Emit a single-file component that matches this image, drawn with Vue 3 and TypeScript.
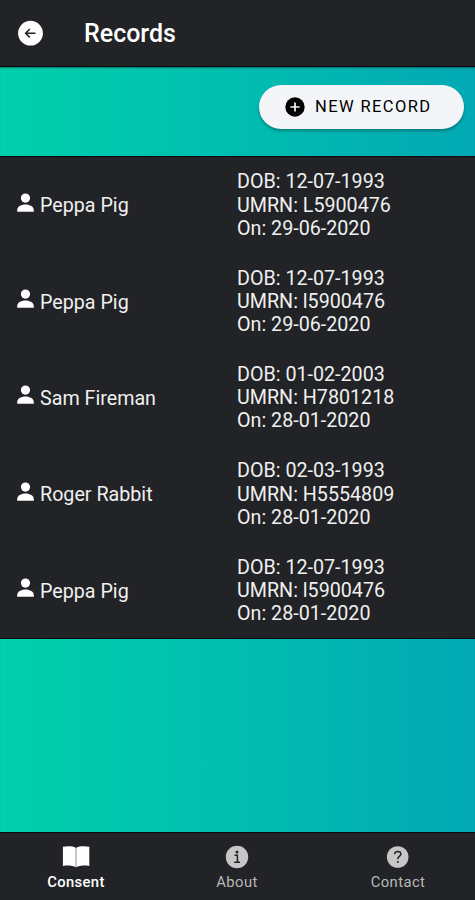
<script setup lang="ts">
interface PatientRecord {
  name: string
  dob: string
  umrn: string
  on: string
}

const records: PatientRecord[] = [
  { name: 'Peppa Pig', dob: '12-07-1993', umrn: 'L5900476', on: '29-06-2020' },
  { name: 'Peppa Pig', dob: '12-07-1993', umrn: 'l5900476', on: '29-06-2020' },
  { name: 'Sam Fireman', dob: '01-02-2003', umrn: 'H7801218', on: '28-01-2020' },
  { name: 'Roger Rabbit', dob: '02-03-1993', umrn: 'H5554809', on: '28-01-2020' },
  { name: 'Peppa Pig', dob: '12-07-1993', umrn: 'l5900476', on: '28-01-2020' },
]
</script>

<template>
  <div class="screen">
    <header class="toolbar">
      <button class="back" aria-label="Back">
        <svg viewBox="0 0 26 26" width="26" height="26">
          <circle cx="13.5" cy="13.2" r="12.4" fill="#fff" />
          <path d="M12.8 9 8.6 13.2l4.200 4.200M8.800 13.200h9.700" fill="none" stroke="#222326" stroke-width="1.500" />
        </svg>
      </button>
      <h1>Records</h1>
    </header>

    <main class="content">
      <div class="actions">
        <button class="new-record">
          <svg viewBox="0 0 20 20" width="20" height="20">
            <circle cx="10" cy="10" r="9.7" fill="#000" />
            <path d="M10 5.400v9.200M5.400 10h9.200" stroke="#f4f5f8" stroke-width="1.700" />
          </svg>
          <span>NEW RECORD</span>
        </button>
      </div>
      <ul class="list">
        <li v-for="(record, index) in records" :key="index" class="row">
          <div class="person">
            <svg viewBox="0 0 18 20" width="18" height="20">
              <circle cx="8.500" cy="5.100" r="4.600" fill="#fff" />
              <path d="M.2 18.700v-1.500c0-3.400 3.700-5.600 8.300-5.600s8.300 2.200 8.300 5.600v1.500z" fill="#fff" />
            </svg>
            <span>{{ record.name }}</span>
          </div>
          <div class="details">
            <div>DOB: {{ record.dob }}</div>
            <div>UMRN: {{ record.umrn }}</div>
            <div>On: {{ record.on }}</div>
          </div>
        </li>
      </ul>
    </main>

    <nav class="tabs">
      <a class="tab active">
        <svg viewBox="0 0 28 24" width="28" height="24">
          <path d="M.9 1.800C5 1 10.500 1 14 2.900 17.500 1 23 1 27.300 1.800V20.900C23 20 17.500 20.300 14 22.200 10.500 20.300 5 20 .9 20.900z" fill="#fff" />
          <path d="M14 3v19" stroke="#aaa" stroke-width="1.300" />
        </svg>
        <span>Consent</span>
      </a>
      <a class="tab">
        <svg viewBox="0 0 24 24" width="24" height="24">
          <circle cx="12" cy="12" r="11.200" fill="#c6c6c7" />
          <circle cx="12" cy="7.100" r="1.500" fill="#222326" />
          <path d="M9.500 10.300h2.900v7M9.200 17.300h5.800" fill="none" stroke="#222326" stroke-width="1.500" />
        </svg>
        <span>About</span>
      </a>
      <a class="tab">
        <svg viewBox="0 0 24 24" width="24" height="24">
          <circle cx="11.700" cy="12" r="10.800" fill="#c6c6c7" />
          <path d="M8.700 9.200c0-1.900 1.300-2.700 3-2.700 1.800 0 3.200 1 3.200 2.600 0 2.300-3.100 2.300-3.100 4.700v.5" fill="none" stroke="#222326" stroke-width="1.500" />
          <circle cx="11.800" cy="16.900" r="1" fill="#222326" />
        </svg>
        <span>Contact</span>
      </a>
    </nav>
  </div>
</template>

<style>
body {
  margin: 0;
  background: #222326;
}
</style>

<style scoped>
.screen {
  display: flex;
  flex-direction: column;
  box-sizing: border-box;
  height: 900px;
  overflow: hidden;
  background: #222326;
  color: #f0f0f0;
  font-family: Roboto, sans-serif;
}
svg {
  display: block;
  flex: none;
}
button {
  border: 0;
  margin: 0;
  padding: 0;
  font: inherit;
}
.toolbar {
  display: flex;
  align-items: center;
  gap: 41px;
  box-sizing: border-box;
  height: 67px;
  padding-left: 17px;
  border-bottom: 1px solid #0c0810;
}
.back {
  background: none;
}
h1 {
  margin: 2px 0 0;
  font-size: 25px;
  font-weight: 500;
  line-height: 30px;
  color: #fff;
}
.content {
  flex: 1;
  background: linear-gradient(90deg, #00d0ac, #01bdb0 50%, #02a9b4);
  box-shadow: inset 0 2px 2px -1px rgba(0, 0, 0, 0.4);
}
.actions {
  display: flex;
  justify-content: flex-end;
  box-sizing: border-box;
  height: 89px;
  padding: 18px 11.500px 0 0;
}
.new-record {
  display: flex;
  align-items: center;
  justify-content: center;
  gap: 9.500px;
  box-sizing: border-box;
  width: 205px;
  height: 44px;
  padding-right: 5px;
  border-radius: 22px;
  background: #f4f5f8;
  color: #000;
  font-size: 16.500px;
  font-weight: 400;
  letter-spacing: 1.400px;
  line-height: 20px;
  box-shadow: 0 2px 3px rgba(0, 0, 0, 0.3);
}
.new-record span {
  margin-top: -1px;
}
.list {
  box-sizing: border-box;
  height: 482.500px;
  margin: 0;
  padding: 1px 0 0;
  list-style: none;
  background: #222326;
  border-top: 1px solid #0c0810;
  border-bottom: 1px solid #0c0810;
}
.row {
  display: grid;
  grid-template-columns: 220px 1fr;
  align-items: start;
  box-sizing: border-box;
  height: 96.400px;
  padding: 12.300px 17px 0;
  font-size: 19.700px;
  line-height: 23.200px;
}
.person {
  display: flex;
  gap: 5px;
  padding-top: 24px;
}
.person svg {
  margin-top: -1.800px;
}
.tabs {
  display: grid;
  grid-template-columns: 152px 170px 152px;
  box-sizing: border-box;
  height: 68px;
  border-top: 1px solid #0c0810;
}
.tab {
  display: flex;
  flex-direction: column;
  align-items: center;
  gap: 4px;
  padding-top: 12px;
  color: #b8b8b9;
  font-size: 14.800px;
  font-weight: 400;
  letter-spacing: 0.420px;
  line-height: 18px;
}
.tab.active {
  color: #fff;
  font-weight: 500;
  letter-spacing: 0.350px;
}
</style>
